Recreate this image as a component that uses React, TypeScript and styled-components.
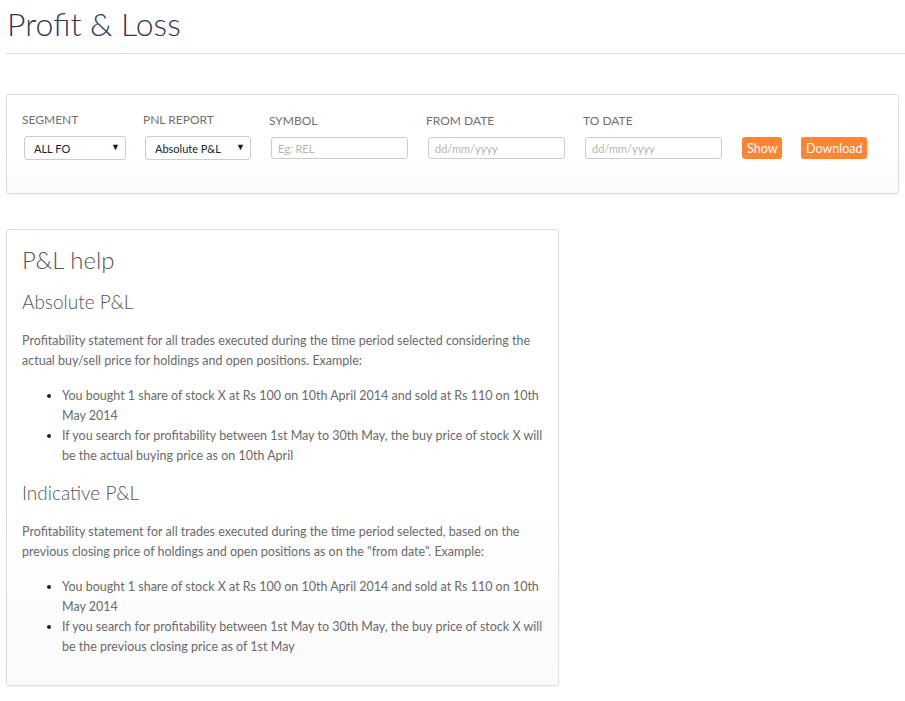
import styled, { createGlobalStyle } from "styled-components";

const GlobalStyle = createGlobalStyle`
  body {
    margin: 0;
    background: #fff;
    font-family: Lato, "Liberation Sans", sans-serif;
    color: #666;
  }
`;

const Page = styled.div`
  padding: 0 0 14px 6px;
`;

const Title = styled.h1`
  margin: 0;
  padding: 4px 0 9px 1px;
  font-size: 32px;
  font-weight: 300;
  line-height: 40px;
  color: #353555;
  border-bottom: 1px solid #ddd;
`;

const Card = styled.div<{ $width?: string }>`
  width: ${p => p.$width || "auto"};
  box-sizing: border-box;
  background: linear-gradient(#fff 60%, #fafafa);
  border: 1px solid #ddd;
  border-radius: 3px;
  box-shadow: 0 1px 2px rgba(0, 0, 0, 0.05);
`;

const FilterCard = styled(Card)`
  margin: 40px 6px 0 0;
  padding: 17px 15px 33px;
  display: grid;
  grid-template-columns: 121px 126px 157px 157px 157px 59px auto;
  align-items: end;
`;

const Field = styled.div`
  display: flex;
  flex-direction: column;
`;

const Label = styled.label`
  font-size: 12px;
  line-height: 16px;
  color: #707070;
  text-transform: uppercase;
  margin-bottom: 8px;
`;

const SelectWrap = styled.div<{ $width: number }>`
  position: relative;
  width: ${p => p.$width}px;
  margin-left: 2px;
`;

const Select = styled.select`
  appearance: none;
  width: 100%;
  height: 24px;
  box-sizing: border-box;
  padding: 0 0 0 9px;
  border: 1px solid #ccc;
  border-radius: 3px;
  background: #fff;
  font-family: Lato, "Liberation Sans", sans-serif;
  font-size: 11px;
  color: #222;
`;

const Arrow = styled.span`
  position: absolute;
  right: 6px;
  top: 5px;
  font-size: 9px;
  color: #111;
  pointer-events: none;
`;

const Input = styled.input`
  width: 137px;
  height: 22px;
  box-sizing: border-box;
  margin: 0 0 1px 2px;
  padding: 0 6px;
  border: 1px solid #ccc;
  border-radius: 3px;
  font-family: Lato, "Liberation Sans", sans-serif;
  font-size: 11px;
  &::placeholder {
    color: #b5b5b5;
  }
`;

const Button = styled.button`
  justify-self: start;
  height: 22px;
  margin-left: 2px;
  margin-bottom: 1px;
  padding: 0 5px;
  border: none;
  border-radius: 3px;
  background: #ff8533;
  color: #fff;
  font-family: Lato, "Liberation Sans", sans-serif;
  font-size: 12.5px;
  cursor: pointer;
`;

const HelpCard = styled(Card)`
  margin-top: 35px;
  padding: 14px 15px 14px;
`;

const HelpTitle = styled.h2`
  margin: 0 0 13px;
  font-size: 24px;
  font-weight: 300;
  line-height: 32px;
  color: #555;
`;

const SubTitle = styled.h3`
  margin: 0 0 16px;
  font-size: 19px;
  font-weight: 300;
  line-height: 26px;
  color: #555;
`;

const Text = styled.p`
  margin: 0 0 15px;
  font-size: 12.5px;
  line-height: 20px;
  color: #6a6a6a;
`;

const List = styled.ul`
  margin: 0 0 14px;
  padding-left: 40px;
  font-size: 12.5px;
  line-height: 20px;
  color: #6a6a6a;
  li::marker {
    color: #222;
  }
`;

const sections = [
  {
    title: "Absolute P&L",
    text: "Profitability statement for all trades executed during the time period selected considering the actual buy/sell price for holdings and open positions. Example:",
    items: [
      "You bought 1 share of stock X at Rs 100 on 10th April 2014 and sold at Rs 110 on 10th May 2014",
      "If you search for profitability between 1st May to 30th May, the buy price of stock X will be the actual buying price as on 10th April",
    ],
  },
  {
    title: "Indicative P&L",
    text: "Profitability statement for all trades executed during the time period selected, based on the previous closing price of holdings and open positions as on the \"from date\". Example:",
    items: [
      "You bought 1 share of stock X at Rs 100 on 10th April 2014 and sold at Rs 110 on 10th May 2014",
      "If you search for profitability between 1st May to 30th May, the buy price of stock X will be the previous closing price as of 1st May",
    ],
  },
];

export default function App() {
  return (
    <Page>
      <GlobalStyle />
      <Title>Profit &amp; Loss</Title>
      <FilterCard>
        <Field>
          <Label>Segment</Label>
          <SelectWrap $width={102}>
            <Select defaultValue="fo">
              <option value="fo">ALL FO</option>
              <option value="eq">ALL EQ</option>
            </Select>
            <Arrow>▼</Arrow>
          </SelectWrap>
        </Field>
        <Field>
          <Label>PNL Report</Label>
          <SelectWrap $width={106}>
            <Select defaultValue="abs">
              <option value="abs">Absolute P&amp;L</option>
              <option value="ind">Indicative P&amp;L</option>
            </Select>
            <Arrow>▼</Arrow>
          </SelectWrap>
        </Field>
        <Field>
          <Label>Symbol</Label>
          <Input placeholder="Eg: REL" />
        </Field>
        <Field>
          <Label>From Date</Label>
          <Input placeholder="dd/mm/yyyy" />
        </Field>
        <Field>
          <Label>To Date</Label>
          <Input placeholder="dd/mm/yyyy" />
        </Field>
        <Button>Show</Button>
        <Button>Download</Button>
      </FilterCard>
      <HelpCard $width="553px">
        <HelpTitle>P&amp;L help</HelpTitle>
        {sections.map(s => (
          <div key={s.title}>
            <SubTitle>{s.title}</SubTitle>
            <Text>{s.text}</Text>
            <List>
              {s.items.map(item => (
                <li key={item}>{item}</li>
              ))}
            </List>
          </div>
        ))}
      </HelpCard>
    </Page>
  );
}
